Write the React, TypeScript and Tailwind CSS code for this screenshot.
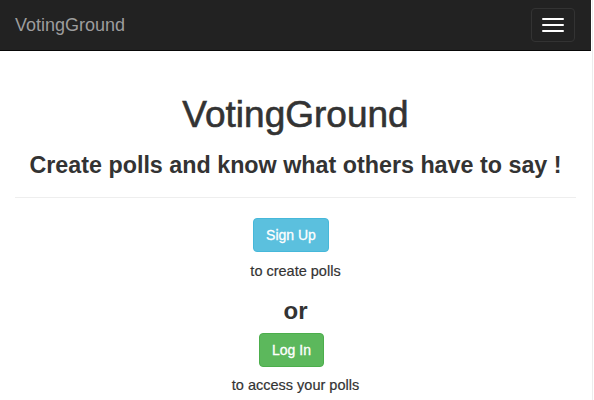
const font = { fontFamily: '"Liberation Sans", Arial, sans-serif' };

export default function App() {
  return (
    <div className="flex min-h-[400px] bg-white text-[#333]" style={font}>
      <div className="w-[591px]">
        <nav className="flex h-[51px] items-center justify-between border-b border-[#080808] bg-[#222] pl-[15px] pr-[16px]">
          <a className="text-[18px] leading-[20px] text-[#9d9d9d]">VotingGround</a>
          <button className="flex h-[34px] w-[44px] flex-col items-center justify-center gap-[4px] rounded-[4px] border border-[#333]">
            <span className="block h-[2px] w-[22px] rounded-[1px] bg-white" />
            <span className="block h-[2px] w-[22px] rounded-[1px] bg-white" />
            <span className="block h-[2px] w-[22px] rounded-[1px] bg-white" />
          </button>
        </nav>

        <div className="px-[15px] text-center">
          <h1 className="mt-[44px] text-[37px] leading-[40px] font-normal [-webkit-text-stroke:0.6px_#333]">
            VotingGround
          </h1>
          <h2 className="mt-[17px] text-[23.3px] leading-[26px] font-bold">
            Create polls and know what others have to say !
          </h2>
          <hr className="mt-[19px] border-t border-[#eee]" />

          <div className="flex flex-col items-center">
            <button className="mt-[20px] mr-[9px] w-[76px] rounded-[4px] border border-[#46b8da] bg-[#5bc0de] py-[6px] text-[14px] leading-[20px] text-white [-webkit-text-stroke:0.3px_white]">
              Sign Up
            </button>
            <p className="mt-[9px] text-[14.5px] leading-[20px] [-webkit-text-stroke:0.2px_#333]">to create polls</p>
            <p className="mt-[17px] text-[24px] leading-[26px] font-bold">or</p>
            <button className="mt-[9px] mr-[8px] w-[65px] rounded-[4px] border border-[#4cae4c] bg-[#5cb85c] py-[6px] text-[14px] leading-[20px] text-white [-webkit-text-stroke:0.3px_white]">
              Log In
            </button>
            <p className="mt-[8px] text-[14.5px] leading-[20px] [-webkit-text-stroke:0.2px_#333]">to access your polls</p>
          </div>
        </div>
      </div>
      <div className="w-px" />
      <div className="w-px bg-[#ececec]" />
    </div>
  );
}
